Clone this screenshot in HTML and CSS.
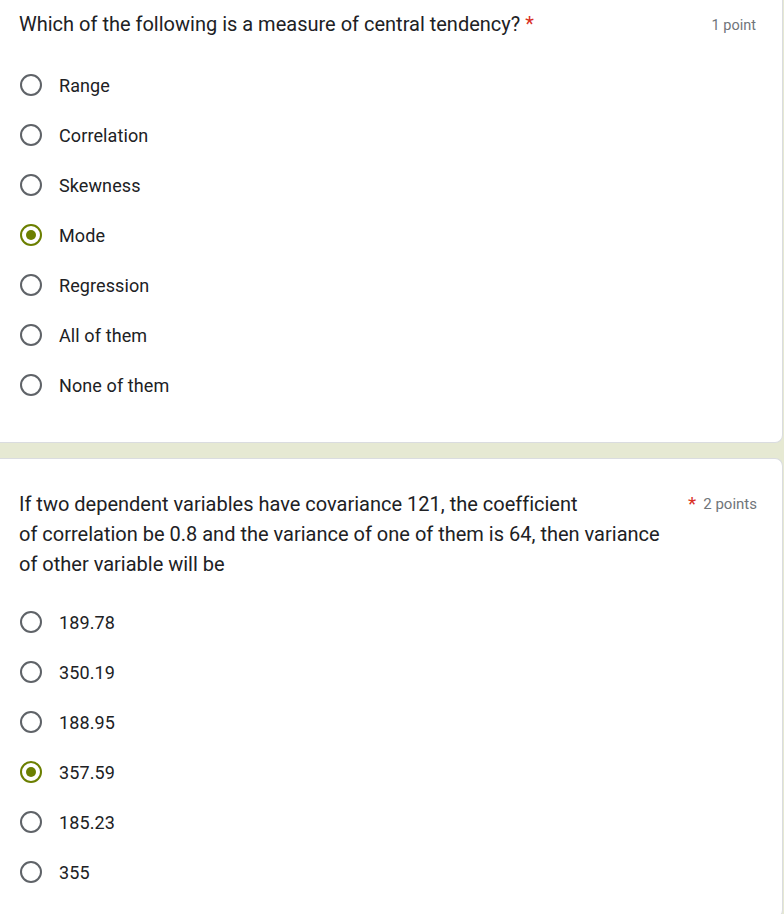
FILE: index.html
```html
<!DOCTYPE html>
<html lang="en">
<head>
<meta charset="utf-8">
<title>Quiz</title>
<link rel="stylesheet" href="styles.css">
</head>
<body>
<div class="page">
  <section class="card card-first">
    <div class="q-head">
      <div class="q-title">Which of the following is a measure of central tendency? <span class="req">*</span></div>
      <div class="q-points">1 point</div>
    </div>
    <div class="options options-first">
      <div class="opt"><span class="radio"></span><span class="label">Range</span></div>
      <div class="opt"><span class="radio"></span><span class="label">Correlation</span></div>
      <div class="opt"><span class="radio"></span><span class="label">Skewness</span></div>
      <div class="opt"><span class="radio checked"></span><span class="label">Mode</span></div>
      <div class="opt"><span class="radio"></span><span class="label">Regression</span></div>
      <div class="opt"><span class="radio"></span><span class="label">All of them</span></div>
      <div class="opt"><span class="radio"></span><span class="label">None of them</span></div>
    </div>
  </section>
  <section class="card card-second">
    <div class="q-text"><span class="q-side"><span class="req">*</span><span class="pts">2 points</span></span>If two dependent variables have covariance 121, the coefficient of correlation be 0.8 and the variance of one of them is 64, then variance of other variable will be</div>
    <div class="options options-second">
      <div class="opt"><span class="radio"></span><span class="label">189.78</span></div>
      <div class="opt"><span class="radio"></span><span class="label">350.19</span></div>
      <div class="opt"><span class="radio"></span><span class="label">188.95</span></div>
      <div class="opt"><span class="radio checked"></span><span class="label">357.59</span></div>
      <div class="opt"><span class="radio"></span><span class="label">185.23</span></div>
      <div class="opt"><span class="radio"></span><span class="label">355</span></div>
    </div>
  </section>
</div>
</body>
</html>
```

FILE: styles.css
```css
* { box-sizing: border-box; }
html, body {
  margin: 0;
  padding: 0;
}
body {
  background: #e6e9d3;
  font-family: Roboto, "Noto Sans", Arial, sans-serif;
  font-variant-ligatures: none;
  color: #202124;
  overflow: hidden;
}
.page {
  display: flex;
  flex-direction: column;
  gap: 15px;
  width: 784px;
}
.card {
  background: #fff;
  margin-right: 1px;
  border: 1px solid #dadce0;
  border-left: none;
  border-radius: 0 8px 8px 0;
  padding: 0 26px 0 19px;
}
.card-first {
  border-top: none;
  border-radius: 0 0 8px 0;
  padding-top: 12px;
  padding-bottom: 32px;
}
.card-second {
  padding-top: 30px;
  padding-bottom: 20px;
}
.q-head {
  display: flex;
  justify-content: space-between;
  align-items: center;
  height: 24px;
}
.q-title {
  font-size: 20px;
  line-height: 24px;
}
.req { color: #d93025; }
.q-points {
  font-size: 14.5px;
  color: #70757a;
  padding-top: 2px;
}
.q-text {
  font-size: 20px;
  line-height: 30px;
  width: 660px;
}
.q-side {
  float: right;
  width: 72px;
  margin-left: 95px;
  margin-right: -78px;
  font-size: 15px;
  line-height: 30px;
  white-space: nowrap;
  text-align: right;
}
.q-side .req { font-size: 19px; vertical-align: -1px; margin-right: 7px; }
.pts { color: #70757a; }
.options-first { margin-top: 24px; }
.options-second { margin-top: 18px; }
.opt {
  display: flex;
  align-items: center;
  height: 50px;
  gap: 17px;
}
.radio {
  width: 22px;
  height: 22px;
  margin-left: 1px;
  border: 2px solid #5f6368;
  border-radius: 50%;
  flex: none;
  display: flex;
  align-items: center;
  justify-content: center;
}
.radio.checked {
  border-color: #6b7f00;
}
.radio.checked::after {
  content: "";
  width: 10px;
  height: 10px;
  border-radius: 50%;
  background: #6b7f00;
}
.label {
  font-size: 18px;
  letter-spacing: 0.1px;
}
```
